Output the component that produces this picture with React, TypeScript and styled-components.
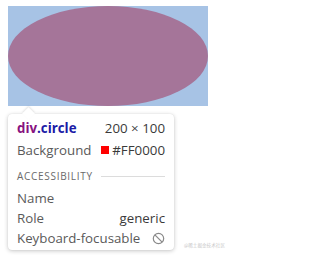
import React from 'react'
import styled, { createGlobalStyle } from 'styled-components'

const GlobalStyle = createGlobalStyle`
    body {
        margin: 0;
        background: #ffffff;
        font-family: 'Open Sans', 'Noto Sans', sans-serif;
    }
`

const App: React.FC = () => {
    return (
        <>
            <GlobalStyle />
            <Page>
                <Target>
                    <Circle />
                </Target>
                <Tooltip>
                    <Row>
                        <Selector>
                            <TagName>div</TagName>
                            <ClassName>.circle</ClassName>
                        </Selector>
                        <Value>200 × 100</Value>
                    </Row>
                    <Row>
                        <Label>Background</Label>
                        <Value>
                            <Swatch color="#ff0000" />
                            #FF0000
                        </Value>
                    </Row>
                    <SectionHeader>
                        <span>ACCESSIBILITY</span>
                        <Divider />
                    </SectionHeader>
                    <Row>
                        <Label>Name</Label>
                    </Row>
                    <Row>
                        <Label>Role</Label>
                        <Value>generic</Value>
                    </Row>
                    <Row>
                        <Label>Keyboard-focusable</Label>
                        <Value>
                            <svg width="13" height="13" viewBox="0 0 14 14" fill="none">
                                <circle cx="7" cy="7" r="5.6" stroke="#8a8a8a" strokeWidth="1.3" />
                                <line x1="3.1" y1="3.1" x2="10.9" y2="10.9" stroke="#8a8a8a" strokeWidth="1.3" />
                            </svg>
                        </Value>
                    </Row>
                </Tooltip>
                <Watermark>@稀土掘金技术社区</Watermark>
            </Page>
        </>
    )
}

export default App

const Page = styled.div`
    position: relative;
    width: 233px;
    height: 257px;
    padding: 6px 0 0 8px;
    box-sizing: border-box;
    display: flex;
    flex-direction: column;
`

const Target = styled.div`
    width: 200px;
    height: 100px;
    background: #a7c3e5;
`

const Circle = styled.div`
    width: 100%;
    height: 100%;
    border-radius: 50%;
    background: #a57599;
`

const Tooltip = styled.div`
    position: relative;
    margin-top: 8px;
    width: 166px;
    box-sizing: border-box;
    padding: 4px 9px 2px 9px;
    background: #ffffff;
    border-radius: 4px;
    box-shadow: 0 1px 4px rgba(0, 0, 0, 0.22), 0 0 1px rgba(0, 0, 0, 0.12);
    font-size: 13.3px;
    color: #5a5a5a;

    &::before {
        content: '';
        position: absolute;
        top: -5px;
        left: 16px;
        width: 9px;
        height: 9px;
        background: #ffffff;
        transform: rotate(45deg);
        box-shadow: -1px -1px 2px rgba(0, 0, 0, 0.1);
    }
`

const Row = styled.div`
    position: relative;
    display: flex;
    justify-content: space-between;
    align-items: center;
    height: 20px;
    white-space: nowrap;

    & + & {
        margin-top: 2px;
    }
`

const Selector = styled.span`
    font-weight: 700;
`

const TagName = styled.span`
    color: #881280;
`

const ClassName = styled.span`
    color: #1a1aa6;
`

const Label = styled.span`
    color: #5a5a5a;
`

const Value = styled.span`
    display: flex;
    align-items: center;
    gap: 3px;
    color: #3a3a3a;
`

const Swatch = styled.span<{ color: string }>`
    display: inline-block;
    width: 8px;
    height: 8px;
    background: ${(p) => p.color};
`

const SectionHeader = styled.div`
    display: flex;
    align-items: center;
    gap: 8px;
    height: 24px;
    margin-top: 4px;
    font-size: 10px;
    letter-spacing: 0.7px;
    color: #6a6a6a;

    & + ${Row} {
        margin-top: 0;
    }

    & ~ ${Row} + ${Row} {
        margin-top: 0;
    }
`

const Divider = styled.div`
    flex: 1;
    height: 1px;
    background: #dcdcdc;
`

const Watermark = styled.div`
    position: absolute;
    right: 8px;
    bottom: 9px;
    font-size: 4.6px;
    color: #c8c8c8;
    font-family: 'Noto Sans CJK SC', sans-serif;
`
